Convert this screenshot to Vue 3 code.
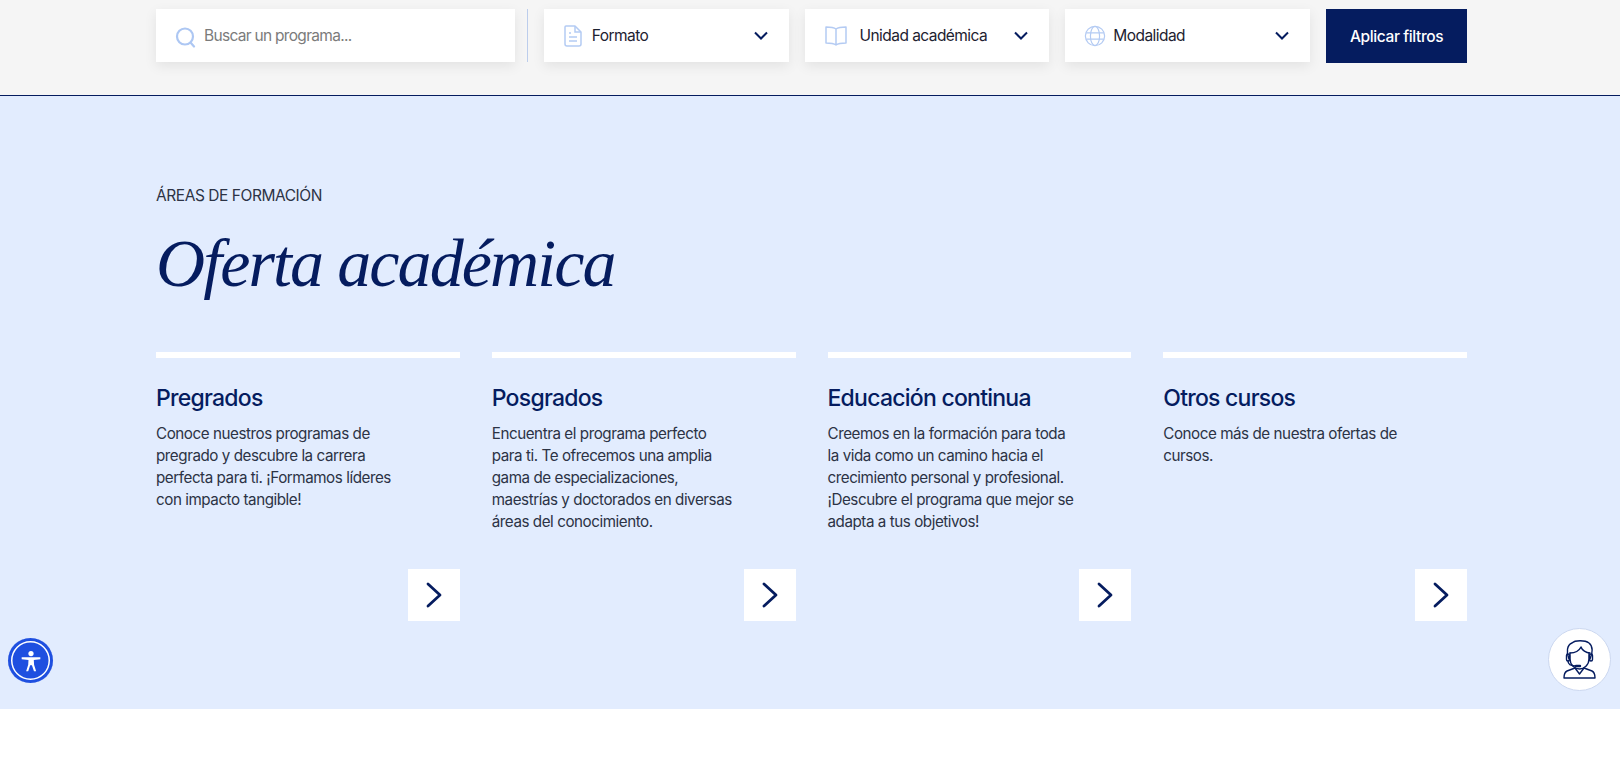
<template>
  <div class="page">
    <div class="filters">
      <div class="filters-inner">
        <div class="box search">
          <svg class="ico" width="24" height="24" viewBox="0 0 24 24" fill="none" stroke="#adc7f3" stroke-width="2.200">
            <circle cx="11" cy="12.500" r="8" />
            <path d="M16.500 18.500l3.500 4" stroke-linecap="round" />
          </svg>
          <span class="placeholder">Buscar un programa...</span>
        </div>
        <div class="sep"></div>
        <div v-for="f in filters" :key="f.label" class="box select" :class="f.icon">
          <svg v-if="f.icon === 'doc'" class="ico" width="20" height="24" viewBox="0 0 20 24" fill="none" stroke="#b4cbf3" stroke-width="1.500">
            <path d="M3 2h9l6 6v12a2 2 0 0 1-2 2H4a2 2 0 0 1-2-2V3a1 1 0 0 1 1-1z" stroke-linejoin="round" />
            <path d="M12 2v6h6M6 9h2M6 13h8M6 17h8" />
          </svg>
          <svg v-else-if="f.icon === 'book'" class="ico" width="24" height="24" viewBox="0 0 24 24" fill="none" stroke="#b4cbf3" stroke-width="1.500">
            <path d="M12 5C10 3.500 6 3 2 3v16c4 0 8 .5 10 2 2-1.500 6-2 10-2V3c-4 0-8 .5-10 2zM12 5v16" stroke-linejoin="round" />
          </svg>
          <svg v-else class="ico" width="22" height="22" viewBox="0 0 24 24" fill="none" stroke="#b4cbf3" stroke-width="1.300">
            <circle cx="12" cy="12" r="10.500" />
            <ellipse cx="12" cy="12" rx="5" ry="10.500" />
            <path d="M2.500 8.500h19M2.500 15.500h19" />
          </svg>
          <span class="select-label">{{ f.label }}</span>
          <svg class="caret" width="14" height="9" viewBox="0 0 14 9" fill="none" stroke="#051c5f" stroke-width="2">
            <path d="M1 1.500l6 6 6-6" />
          </svg>
        </div>
        <button class="apply">Aplicar filtros</button>
      </div>
    </div>

    <section class="areas">
      <div class="areas-inner">
        <p class="eyebrow">ÁREAS DE FORMACIÓN</p>
        <h1 class="title">Oferta académica</h1>
        <div class="cards">
          <article v-for="c in cards" :key="c.title" class="card">
            <h3>{{ c.title }}</h3>
            <p>
              <span v-for="line in c.lines" :key="line" class="line">{{ line }}</span>
            </p>
            <a class="go">
              <svg width="16" height="26" viewBox="0 0 16 26" fill="none" stroke="#051c5f" stroke-width="2.800">
                <path d="M2 2l12 11L2 24" stroke-linecap="round" stroke-linejoin="round" />
              </svg>
            </a>
          </article>
        </div>
      </div>
    </section>

    <div class="a11y">
      <svg width="28" height="28" viewBox="0 0 30 30" fill="#fff">
        <circle cx="15" cy="7" r="2.800" />
        <path d="M5 11h20v2l-7 1 .3 5 2.200 7h-2.300l-2.200-6.500h-1.900L12 26H9.800l2.200-7 .3-5-7.300-1z" />
      </svg>
    </div>

    <div class="agent">
      <svg width="33" height="39" viewBox="0 0 33 39" fill="none" stroke="#051c5f" stroke-width="1.400" stroke-linejoin="round" stroke-linecap="round">
        <path d="M6 19C3 12 4 5 9 3c3-3 13-3 17 0 4 3 4 10 1 16" />
        <path d="M7 13c5 0 9-2 11-6 1 3 5 6 9 6" />
        <path d="M7 13v6c0 6 5 10 9.500 10s9.500-4 9.500-10v-6" />
        <rect x="3.500" y="14" width="3" height="7" rx="1.500" />
        <rect x="26.500" y="14" width="3" height="7" rx="1.500" />
        <path d="M5 21c0 3 3 5 8 5" />
        <path d="M13 26h4" stroke-width="2.400" />
        <path d="M12 28l-8 3c-2 1-3 4-3 7h31c0-3-1-6-3-7l-8-3-4.500 6z" />
      </svg>
    </div>
  </div>
</template>

<script setup>
const filters = [
  { label: 'Formato', icon: 'doc' },
  { label: 'Unidad académica', icon: 'book' },
  { label: 'Modalidad', icon: 'globe' },
]

const cards = [
  {
    title: 'Pregrados',
    lines: ['Conoce nuestros programas de', 'pregrado y descubre la carrera', 'perfecta para ti. ¡Formamos líderes', 'con impacto tangible!'],
  },
  {
    title: 'Posgrados',
    lines: ['Encuentra el programa perfecto', 'para ti. Te ofrecemos una amplia', 'gama de especializaciones,', 'maestrías y doctorados en diversas', 'áreas del conocimiento.'],
  },
  {
    title: 'Educación continua',
    lines: ['Creemos en la formación para toda', 'la vida como un camino hacia el', 'crecimiento personal y profesional.', '¡Descubre el programa que mejor se', 'adapta a tus objetivos!'],
  },
  {
    title: 'Otros cursos',
    lines: ['Conoce más de nuestra ofertas de', 'cursos.'],
  },
]
</script>

<style>
html, body {
  margin: 0;
  background: #fff;
  overflow: hidden;
}
</style>

<style scoped>
.page {
  position: relative;
  height: 759px;
  font-family: Inter, 'Liberation Sans', sans-serif;
  color: #2c3345;
}
.filters {
  height: 95px;
  background: #f5f5f5;
  border-bottom: 1px solid #051c5f;
}
.filters-inner {
  width: 1311px;
  margin-left: 156px;
  padding-top: 9px;
  display: flex;
  align-items: flex-start;
}
.box {
  height: 53px;
  background: #fff;
  box-shadow: 0 4px 12px rgba(0, 0, 0, 0.08);
  display: flex;
  align-items: center;
  box-sizing: border-box;
}
.search {
  width: 359px;
  padding-left: 18px;
}
.placeholder {
  margin-left: 6px;
  font-size: 15.500px;
  letter-spacing: -0.7px;
  color: #7b7b7b;
}
.sep {
  width: 1px;
  height: 53px;
  background: #bccdec;
  margin: 0 16px 0 12px;
}
.select {
  width: 245px;
  margin-right: 16px;
  padding: 0 21px 0 19px;
  font-size: 15.500px;
  letter-spacing: -0.55px;
  color: #1d2230;
}
.select-label {
  flex: 1;
  margin-left: 9px;
}
.book .select-label {
  margin-left: 12px;
}
.globe .select-label {
  margin-left: 7px;
}
.apply {
  width: 141px;
  height: 54px;
  border: 0;
  background: #051c5f;
  color: #fff;
  font-family: inherit;
  font-size: 15.500px;
  font-weight: 500;
  letter-spacing: -0.4px;
}
.areas {
  height: 613px;
  background: #e2ecfe;
}
.areas-inner {
  width: 1311px;
  margin-left: 156px;
  padding-top: 90px;
}
.eyebrow {
  margin: 0;
  font-size: 15.500px;
  line-height: 20px;
  letter-spacing: -0.45px;
}
.title {
  margin: 17px 0 0;
  font-family: 'Liberation Serif', serif;
  font-style: italic;
  font-weight: 400;
  font-size: 68px;
  line-height: 80px;
  letter-spacing: -1.900px;
  color: #051c5f;
}
.cards {
  margin-top: 49px;
  display: grid;
  grid-template-columns: repeat(4, 1fr);
  gap: 32px;
}
.card {
  height: 269px;
  box-sizing: border-box;
  position: relative;
  border-top: 6px solid #fff;
}
.card h3 {
  margin: 25px 0 0;
  font-size: 23px;
  line-height: 30px;
  font-weight: 500;
  letter-spacing: -0.75px;
  color: #051c5f;
}
.card p {
  margin: 10px 0 0;
  font-size: 15.200px;
  line-height: 22px;
  letter-spacing: -0.45px;
}
.line {
  display: block;
}
.go {
  position: absolute;
  right: 0;
  bottom: 0;
  width: 52px;
  height: 52px;
  background: #fff;
  display: flex;
  align-items: center;
  justify-content: center;
}
.a11y {
  position: absolute;
  left: 8px;
  top: 638px;
  width: 45px;
  height: 45px;
  background: #1e4fe0;
  box-shadow: inset 0 0 0 3px #1e4fe0, inset 0 0 0 4.500px #fff;
  border-radius: 50%;
  display: flex;
  align-items: center;
  justify-content: center;
}
.agent {
  position: absolute;
  left: 1548px;
  top: 628px;
  width: 63px;
  height: 63px;
  box-sizing: border-box;
  border: 1px solid #ccd8f0;
  border-radius: 50%;
  background: #fff;
  display: flex;
  align-items: center;
  justify-content: center;
}
</style>
